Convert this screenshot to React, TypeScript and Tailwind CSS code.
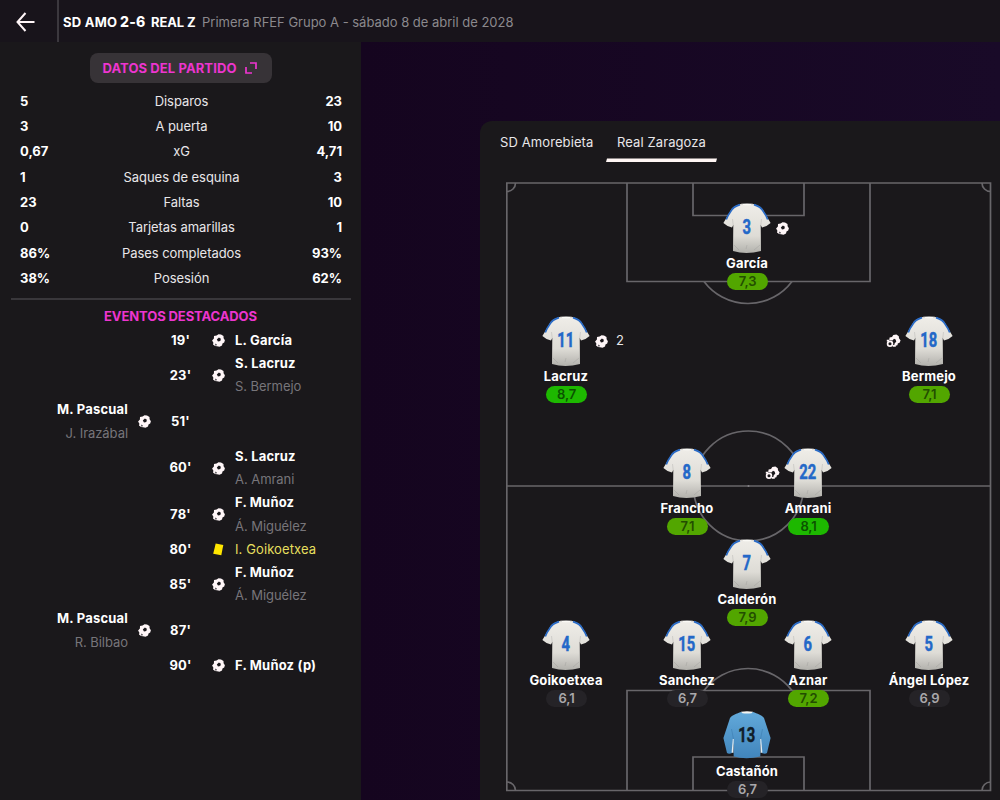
import React from 'react';

interface MatchEvent {
  minute: string;
  side: 'home' | 'away';
  type: 'goal' | 'yellow';
  player: string;
  assist?: string;
}

interface Player {
  name: string;
  number: string;
  rating: string;
  x: number;
  y: number;
  level: 'high' | 'good' | 'normal';
  goals?: number;
  assists?: number;
  keeper?: boolean;
}

const stats = [
  { label: 'Disparos', home: '5', away: '23' },
  { label: 'A puerta', home: '3', away: '10' },
  { label: 'xG', home: '0,67', away: '4,71' },
  { label: 'Saques de esquina', home: '1', away: '3' },
  { label: 'Faltas', home: '23', away: '10' },
  { label: 'Tarjetas amarillas', home: '0', away: '1' },
  { label: 'Pases completados', home: '86%', away: '93%' },
  { label: 'Posesión', home: '38%', away: '62%' },
];

const events: MatchEvent[] = [
  { minute: "19'", side: 'away', type: 'goal', player: 'L. García' },
  { minute: "23'", side: 'away', type: 'goal', player: 'S. Lacruz', assist: 'S. Bermejo' },
  { minute: "51'", side: 'home', type: 'goal', player: 'M. Pascual', assist: 'J. Irazábal' },
  { minute: "60'", side: 'away', type: 'goal', player: 'S. Lacruz', assist: 'A. Amrani' },
  { minute: "78'", side: 'away', type: 'goal', player: 'F. Muñoz', assist: 'Á. Miguélez' },
  { minute: "80'", side: 'away', type: 'yellow', player: 'I. Goikoetxea' },
  { minute: "85'", side: 'away', type: 'goal', player: 'F. Muñoz', assist: 'Á. Miguélez' },
  { minute: "87'", side: 'home', type: 'goal', player: 'M. Pascual', assist: 'R. Bilbao' },
  { minute: "90'", side: 'away', type: 'goal', player: 'F. Muñoz (p)' },
];

// x is the middle of the shirt, y its collar, both from the pitch's corner
const players: Player[] = [
  { name: 'García', number: '3', rating: '7,3', x: 241, y: 21, level: 'good', goals: 1 },
  { name: 'Lacruz', number: '11', rating: '8,7', x: 60, y: 134, level: 'high', goals: 2 },
  { name: 'Bermejo', number: '18', rating: '7,1', x: 423, y: 134, level: 'good', assists: 1 },
  { name: 'Francho', number: '8', rating: '7,1', x: 181, y: 266, level: 'good' },
  { name: 'Amrani', number: '22', rating: '8,1', x: 302, y: 266, level: 'high', assists: 1 },
  { name: 'Calderón', number: '7', rating: '7,9', x: 241, y: 357, level: 'good' },
  { name: 'Goikoetxea', number: '4', rating: '6,1', x: 60, y: 438, level: 'normal' },
  { name: 'Sanchez', number: '15', rating: '6,7', x: 181, y: 438, level: 'normal' },
  { name: 'Aznar', number: '6', rating: '7,2', x: 302, y: 438, level: 'good' },
  { name: 'Ángel López', number: '5', rating: '6,9', x: 423, y: 438, level: 'normal' },
  { name: 'Castañón', number: '13', rating: '6,7', x: 241, y: 529, level: 'normal', keeper: true },
];

const ratingStyles = {
  high: 'bg-[#1db800] text-[#0b5200]',
  good: 'bg-[#52a600] text-[#234d00]',
  normal: 'bg-[#252327] text-[#aaa8ab]',
};

const Ball = () => (
  <svg width="13" height="13" viewBox="0 0 13 13" className="shrink-0">
    <path d="M2 1.900 4.600 1.500 6.500.3 9 .5 11.500 2 11.600 4.200 12.900 6.200 12.200 8.500 10.500 9.500 10 11.600 7.500 12.800 5 12.200 3 12.100 1 10.600 1.400 8.700.1 6.500 1.900 4.400Z" fill="#fff6f8" />
    <path d="M6.900 3.400 8.900 4.700 8.300 7 6 7.400 4.800 5.500Z" fill="#1a181b" />
    <path d="M3.400 9.600 5 10.500 4.200 11.800 2.800 11.300Z" fill="#5b585d" />
  </svg>
);

const Assist = () => (
  <svg width="15" height="14" viewBox="0 0 15 14" className="shrink-0">
    <path d="M3.600 3.600 6 3 7.300 1 10.400.5 12.800 2.200 13 4.200 14.600 6.500 13.400 8.900 11.900 9.200 11.400 11.300 9.600 11.700 8.300 10.800 8.600 9.400 10.300 7.600 9.600 5.400 8 4.800 6.500 6.400 3.200 6Z" fill="#fff6f8" />
    <circle cx="4" cy="9.700" r="2.400" fill="none" stroke="#fff6f8" strokeWidth="1.700" />
    <path d="M6.800 11h3v1.700H6.800ZM.8 5.800h2.400v1.700H.8Z" fill="#fff6f8" />
  </svg>
);

const Card = () => (
  <svg width="13" height="13" viewBox="0 0 13 13" className="shrink-0">
    <path d="M3.700.6 11.300 2.100 9.300 12.300 1.200 10.700Z" fill="#ffe600" />
  </svg>
);

const Shirt = ({ number, keeper }: { number: string; keeper?: boolean }) => (
  <svg width="48" height="51" viewBox="0 0 48 51" className="block">
    <defs>
      <linearGradient id="white-shirt" x1="0" y1="0" x2="0" y2="1">
        <stop offset="0" stopColor="#efede8" />
        <stop offset=".65" stopColor="#dedcd6" />
        <stop offset="1" stopColor="#b2b1ac" />
      </linearGradient>
      <linearGradient id="blue-shirt" x1="0" y1="0" x2="0" y2="1">
        <stop offset="0" stopColor="#62a9da" />
        <stop offset="1" stopColor="#4185bc" />
      </linearGradient>
    </defs>
    {keeper ? (
      <>
        <path d="M18 1C14 2.500 9 4 7 7L.4 27 4 42Q6 43.500 9 42L10.300 32 10.700 45.500Q23 49 37.300 45.500L37.700 32 39 42Q42 43.500 44 42L47.600 27 41 7C39 4 34 2.500 30 1Q24 3 18 1Z" fill="url(#blue-shirt)" />
        <path d="M9.800 28 8.600 41.500 10.300 42 10.700 28ZM38.200 28 39.400 41.500 37.700 42 37.300 28Z" fill="#e7eef2" />
        <path d="M18 .8Q24-.5 30 .8L28.500 2.200Q24 3 19.500 2.200Z" fill="#f5f5f2" />
        <path d="M8.500 18 10.500 28M39.500 18 37.500 28" fill="none" stroke="#3675a8" strokeWidth=".8" opacity=".6" />
      </>
    ) : (
      <>
        <path d="M18 1C13 2.500 9.500 3.500 7.500 8L.4 20Q4 23.500 9 24.500L10.300 22 10 48Q23 52 38 48L37.700 22 39 24.500Q44 23.500 47.600 20L40.500 8C38.500 3.500 35 2.500 30 1Q24 3 18 1Z" fill="url(#white-shirt)" />
        <path d="M17 1.600C12.500 3 9.600 4.500 8 8Q5 12 3.300 16.500M31 1.600C35.500 3 38.400 4.500 40 8Q43 12 44.700 16.500" fill="none" stroke="#2a6bc6" strokeWidth="1.700" />
        <path d="M18 .8Q24 0 30 .8L28 2Q24 2.600 20 2Z" fill="#fbfaf6" />
        <path d="M10.300 23 9.500 16M37.700 23 38.500 16M11 42 16 47M37 42 31 47M23 46 24 42" fill="none" stroke="#77767a" strokeWidth=".7" opacity=".3" />
      </>
    )}
    <text
      transform="translate(23.800 30.500) scale(.72 1)"
      textAnchor="middle"
      strokeWidth=".5"
      className={
        keeper
          ? 'fill-[#101d29] stroke-[#101d29] font-[Roboto,sans-serif] text-[20.500px] font-bold'
          : 'fill-[#2368c8] stroke-[#2368c8] font-[Roboto,sans-serif] text-[20.500px] font-bold'
      }
    >
      {number}
    </text>
  </svg>
);

const Header = () => (
  <header className="flex h-[42px] shrink-0 items-center bg-[#18141b]">
    <div className="flex h-full w-[59px] items-center border-r-2 border-[#3b383e] pt-[1px] pl-4">
      <svg width="19" height="20" viewBox="0 0 19 20" fill="none" stroke="#fff6f8" strokeWidth="2">
        <path d="M9.500 1 1.500 10 9.500 19M1.500 10H18.500" />
      </svg>
    </div>
    <div className="flex items-baseline pt-[1px] pl-1 whitespace-pre">
      <span className="w-[57px] text-[13px] font-bold tracking-[0.25px] text-white">SD AMO</span>
      <span className="w-[31px] text-[14px] font-extrabold tracking-[0.2px] text-white">2-6</span>
      <span className="w-[51px] text-[13px] font-bold tracking-[-0.1px] text-white">REAL Z</span>
      <span className="text-[13px] tracking-[-0.01px] text-[#8b898d]">Primera RFEF Grupo A - sábado 8 de abril de 2028</span>
    </div>
  </header>
);

const EventRow = ({ event }: { event: MatchEvent }) => {
  const icon = event.type === 'goal' ? <Ball /> : <Card />;
  const names = (
    <>
      <div className={event.type === 'yellow' ? 'tracking-[0.1px] text-[#e5df5e]' : 'font-bold tracking-[0.2px] text-white'}>{event.player}</div>
      {event.assist && <div className="tracking-[-0.05px] text-[#77757a]">{event.assist}</div>}
    </>
  );

  return (
    <div className="grid grid-cols-[128px_34px_37px_36px_1fr] items-center text-[13px] leading-[23.2px]">
      <div className="text-right">{event.side === 'home' && names}</div>
      <div className="pl-2.5">{event.side === 'home' && icon}</div>
      <div className="text-center font-bold tracking-[0.2px] text-white">{event.minute}</div>
      <div className="pl-[13px]">{event.side === 'away' && icon}</div>
      <div>{event.side === 'away' && names}</div>
    </div>
  );
};

const MatchData = () => (
  <aside className="w-[361px] shrink-0 bg-[#1a181b]">
    <div className="flex justify-center pt-[11px]">
      <button className="flex h-[30px] w-[182px] items-center rounded-lg bg-[#373337] pl-[13px] text-[13px] font-bold text-[#ed35cf]">
        <span className="w-[142px] pt-[1px] text-left tracking-[0.1px]">DATOS DEL PARTIDO</span>
        <svg width="12" height="12" viewBox="0 0 12 12" fill="none" stroke="currentColor" strokeWidth="1.700">
          <path d="M5 1H11V7M1 5V11H7" />
        </svg>
      </button>
    </div>
    <div className="pt-[6px] pr-[10px] pl-[11px]">
      <div className="border-b-2 border-[#39373b] pb-[7px]">
        {stats.map((stat) => (
          <div key={stat.label} className="grid h-[25.300px] grid-cols-[60px_1fr_60px] items-center px-[9px] text-[13px] text-white">
            <span className="font-bold">{stat.home}</span>
            <span className="pl-[1px] text-center tracking-[-0.05px] text-[#e8e6e9]">{stat.label}</span>
            <span className="text-right font-bold">{stat.away}</span>
          </div>
        ))}
      </div>
    </div>
    <h2 className="h-[28.500px] pt-[6px] text-center text-[13px] leading-[20px] font-bold tracking-[-0.1px] text-[#ed35cf]">EVENTOS DESTACADOS</h2>
    {events.map((event) => (
      <EventRow key={event.minute} event={event} />
    ))}
  </aside>
);

const PitchLines = () => (
  <svg width="486" height="611" viewBox="0 0 486 611" fill="none" stroke="#68666a" strokeWidth="1.700" className="block">
    <path d="M.8 1H484.500V608.500H.8ZM1 304H484.500" />
    <path d="M121 1V99.500H364V1M187 1V33.500H298V1M121 608.500V508.500H364V608.500M187 608.500V575H298V608.500" />
    <path d="M198 99.500A55 55 0 0 0 286 99.500M198 508.500A55 55 0 0 1 286 508.500" />
    <circle cx="242.500" cy="304" r="55" />
    <path d="M9.500 1A8.500 8.500 0 0 1 1 9.500M476 1A8.500 8.500 0 0 0 484.500 9.500M1 600A8.500 8.500 0 0 1 9.500 608.500M484.500 600A8.500 8.500 0 0 0 476 608.500" />
    <circle cx="242.500" cy="304" r="1" fill="#858387" stroke="none" />
  </svg>
);

const PlayerPin = ({ player }: { player: Player }) => (
  <div className="absolute flex w-[120px] -translate-x-1/2 flex-col items-center" style={{ left: player.x, top: player.y }}>
    <div className="relative">
      <Shirt number={player.number} keeper={player.keeper} />
      {player.goals && (
        <div className="absolute top-[18px] left-[53px] flex h-[14px] items-center gap-[8px] text-[13px] text-[#e8e6e9]">
          <Ball />
          {player.goals > 1 && <span>{player.goals}</span>}
        </div>
      )}
      {player.assists && (
        <div className="absolute top-[18px] right-[52px]">
          <Assist />
        </div>
      )}
    </div>
    <div className="h-[19px] text-[13px] leading-[18px] font-bold tracking-[0.15px] whitespace-nowrap text-white">{player.name}</div>
    <div className={`flex h-[17px] w-[41px] items-center justify-center rounded-full pl-[1px] text-[13px] font-semibold tracking-[-0.1px] ${ratingStyles[player.level]}`}>
      {player.rating}
    </div>
  </div>
);

const Lineup = () => (
  <section className="h-[679px] w-[520px] rounded-tl-xl bg-[#1a181b]">
    <nav className="flex h-[41px] pl-5 text-[13px] tracking-[0.1px] text-[#e8e6e9]">
      <button className="flex w-[106px] items-end pb-[10px] whitespace-nowrap">SD Amorebieta</button>
      <button className="flex w-[111px] flex-col items-center justify-end whitespace-nowrap">
        <span className="pb-[6px]">Real Zaragoza</span>
        <svg width="111" height="4" viewBox="0 0 111 4">
          <path d="M1 .4H111L110 4H0Z" fill="#fff6f4" />
        </svg>
      </button>
    </nav>
    <div className="pt-[20px] pl-[26px]">
      <div className="relative h-[611px] w-[486px]">
        <PitchLines />
        {players.map((player) => (
          <PlayerPin key={player.name} player={player} />
        ))}
      </div>
    </div>
  </section>
);

export default function App() {
  return (
    <div className="flex h-[800px] w-[1000px] flex-col overflow-hidden bg-[#170622] font-[Inter,sans-serif]">
      <Header />
      <main className="flex min-h-0 flex-1">
        <MatchData />
        <div className="flex-1 bg-linear-to-r from-[#15051f] to-[#190a28] pt-[79px] pl-[119px]">
          <Lineup />
        </div>
      </main>
    </div>
  );
}
